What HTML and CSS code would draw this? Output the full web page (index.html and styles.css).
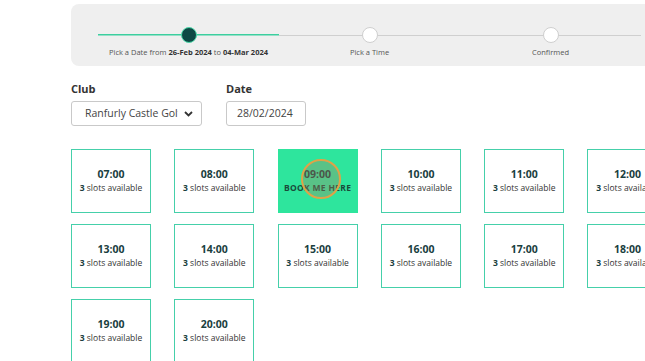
FILE: index.html
```html
<!DOCTYPE html>
<html lang="en">
<head>
  <meta charset="UTF-8" />
  <meta name="viewport" content="width=device-width, initial-scale=1">
  <title>Book a Tee Time</title>
  <link rel="stylesheet" href="styles.css">
</head>
<body>

  <div id="booking">
    <div id="steps">
      <div class="step done">
        <div class="track"><span class="dot current"></span></div>
        <div class="step-label">Pick a Date from <b>26-Feb 2024</b> to <b>04-Mar 2024</b></div>
      </div>
      <div class="step">
        <div class="track"><span class="dot"></span></div>
        <div class="step-label">Pick a Time</div>
      </div>
      <div class="step">
        <div class="track"><span class="dot"></span></div>
        <div class="step-label">Confirmed</div>
      </div>
    </div>

    <div id="filters">
      <div class="field">
        <label>Club</label>
        <div class="select club">
          <span class="select-text">Ranfurly Castle Golf Club</span>
          <svg width="9" height="6" viewBox="0 0 9 6"><path d="M1 1l3.5 3.5L8 1" fill="none" stroke="#333" stroke-width="1.8"/></svg>
        </div>
      </div>
      <div class="field">
        <label>Date</label>
        <div class="select date">28/02/2024</div>
      </div>
    </div>

    <div id="slots">
      <div class="slot"><div class="time">07:00</div><div class="avail"><b>3</b> slots available</div></div>
      <div class="slot"><div class="time">08:00</div><div class="avail"><b>3</b> slots available</div></div>
      <div class="slot active">
        <div class="time">09:00</div>
        <div class="book">BOOK ME HERE</div>
        <span class="cursor"></span>
      </div>
      <div class="slot"><div class="time">10:00</div><div class="avail"><b>3</b> slots available</div></div>
      <div class="slot"><div class="time">11:00</div><div class="avail"><b>3</b> slots available</div></div>
      <div class="slot"><div class="time">12:00</div><div class="avail"><b>3</b> slots available</div></div>
      <div class="slot"><div class="time">13:00</div><div class="avail"><b>3</b> slots available</div></div>
      <div class="slot"><div class="time">14:00</div><div class="avail"><b>3</b> slots available</div></div>
      <div class="slot"><div class="time">15:00</div><div class="avail"><b>3</b> slots available</div></div>
      <div class="slot"><div class="time">16:00</div><div class="avail"><b>3</b> slots available</div></div>
      <div class="slot"><div class="time">17:00</div><div class="avail"><b>3</b> slots available</div></div>
      <div class="slot"><div class="time">18:00</div><div class="avail"><b>3</b> slots available</div></div>
      <div class="slot"><div class="time">19:00</div><div class="avail"><b>3</b> slots available</div></div>
      <div class="slot"><div class="time">20:00</div><div class="avail"><b>3</b> slots available</div></div>
    </div>
  </div>

</body>
</html>
```

FILE: styles.css
```css
html, body {
  margin: 0;
  padding: 0;
  overflow: hidden;
  background: #fff;
  font-family: "Open Sans", "Liberation Sans", sans-serif;
  color: #1d3a3a;
}

#booking {
  width: 700px;
  padding: 4px 0 0 71px;
}

#steps {
  display: flex;
  width: 620px;
  height: 62px;
  box-sizing: border-box;
  padding: 0 27px;
  background: #efefef;
  border-radius: 8px 0 0 8px;
}

.step {
  width: 181px;
  padding-top: 23px;
}

.track {
  height: 16px;
  display: flex;
  justify-content: center;
  align-items: center;
  background: linear-gradient(#cfcfcf, #cfcfcf) no-repeat 0 50% / 100% 1px;
}

.step.done .track {
  background: linear-gradient(#3ccf9f, #3ccf9f) no-repeat 0 50% / 100% 1.5px;
}

.dot {
  width: 14px;
  height: 14px;
  border-radius: 50%;
  background: #fff;
  border: 1px solid #cfcfcf;
}

.dot.current {
  background: #0d4a45;
  border: 1px solid #4bd8a9;
}

.step-label {
  margin-top: 4px;
  font-size: 7.5px;
  line-height: 10px;
  text-align: center;
  color: #555;
}

.step-label b {
  color: #333;
}

#filters {
  display: flex;
  gap: 24px;
  margin-top: 15px;
}

.field label {
  display: block;
  font-size: 11px;
  font-weight: bold;
  line-height: 15px;
  color: #333;
  margin-bottom: 5px;
}

.select {
  height: 25px;
  box-sizing: border-box;
  border: 1px solid #c9c9c9;
  border-radius: 3px;
  font-size: 10.5px;
  line-height: 23px;
  color: #444;
  display: flex;
  align-items: center;
}

.select.club {
  width: 131px;
  padding: 0 8px 0 13px;
  gap: 6px;
}

.select-text {
  flex: 1;
  overflow: hidden;
  white-space: nowrap;
}

.select.date {
  width: 80px;
  padding-left: 10px;
}

#slots {
  display: grid;
  grid-template-columns: repeat(6, 80px);
  column-gap: 23.3px;
  row-gap: 11px;
  margin-top: 23px;
}

.slot {
  position: relative;
  height: 64px;
  box-sizing: border-box;
  border: 1.5px solid #45d0aa;
  display: flex;
  flex-direction: column;
  justify-content: center;
  align-items: center;
  padding-bottom: 1px;
}

.time {
  font-size: 10.5px;
  font-weight: bold;
  line-height: 14px;
  color: #1a4040;
}

.avail {
  font-size: 8.5px;
  line-height: 13px;
  color: #333;
}

.avail b {
  color: #1a4040;
}

.slot.active {
  background: #2ee59d;
  border-color: #2ee59d;
}

.book {
  font-size: 8.5px;
  font-weight: bold;
  line-height: 13px;
  letter-spacing: 0.3px;
  color: #1a4a3a;
}

.cursor {
  position: absolute;
  left: 22px;
  top: 9px;
  width: 36px;
  height: 36px;
  border-radius: 50%;
  border: 2px solid #e0a247;
  background: rgba(170, 130, 95, 0.35);
}
```
